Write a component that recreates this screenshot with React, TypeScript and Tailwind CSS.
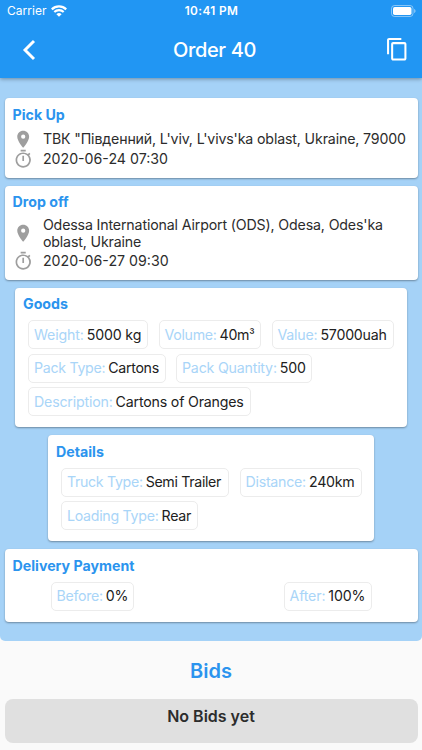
import type { ReactNode } from "react";
import { MdContentCopy, MdLocationOn, MdOutlineTimer } from "react-icons/md";

interface ChipProps {
  label: string;
  value: ReactNode;
  className: string;
  tracking?: string;
}

function Chip({
  label,
  value,
  className,
  tracking = "tracking-[-0.16px]",
}: ChipProps) {
  return (
    <div
      className={`flex h-[29px] shrink-0 items-center gap-[3px] rounded-[5px] border border-[#ececec] pl-[5px] text-[14.2px] whitespace-nowrap ${tracking} ${className}`}
    >
      <span className="text-[#a9d5f8]">{label}:</span>
      <span className="text-[#212121]">{value}</span>
    </div>
  );
}

interface CardProps {
  title: string;
  className: string;
  children: ReactNode;
}

function Card({ title, className, children }: CardProps) {
  return (
    <section
      className={`shrink-0 rounded-[4px] bg-white px-2 pt-[6.5px] shadow-[0_1px_2px_rgba(0,0,0,0.35)] ${className}`}
    >
      <h2 className="text-[14.2px] leading-[20px] font-bold text-[#2b94ee]">
        {title}
      </h2>
      {children}
    </section>
  );
}

interface StopProps {
  address: string[];
  time: string;
}

function Stop({ address, time }: StopProps) {
  return (
    <div className="mt-[4px] text-[14.2px] leading-[17.4px] whitespace-nowrap text-[#2c2c2c]">
      <div className="flex items-center">
        <MdLocationOn className="size-[20.4px] shrink-0 text-[#9e9e9e]" />
        <div className="ml-[10px] tracking-[-0.15px]">
          {address.map((line) => (
            <p key={line}>{line}</p>
          ))}
        </div>
      </div>
      <div className="flex items-center">
        <MdOutlineTimer className="size-[20.4px] shrink-0 text-[#9e9e9e]" />
        <p className="ml-[10px]">{time}</p>
      </div>
    </div>
  );
}

function StatusBar() {
  return (
    <div className="grid h-[21px] grid-cols-3 items-center pr-[6px] pl-[7px] text-[12px] leading-none">
      <div className="flex items-center gap-[4px]">
        <span className="pt-px tracking-[0.05px]">Carrier</span>
        <svg viewBox="0 0 16 12" className="h-[12px] w-[16px]" fill="none">
          <path d="M.8 4.4a10.2 10.2 0 0 1 14.4 0" stroke="white" strokeWidth="2.2" />
          <path d="M3.3 7.1a6.6 6.6 0 0 1 9.4 0" stroke="white" strokeWidth="2.1" />
          <path d="M5.4 9.2a3.7 3.7 0 0 1 5.2 0L8 11.8z" fill="white" />
        </svg>
      </div>
      <span className="pt-[2px] text-center text-[11.8px] font-semibold tracking-[0.4px]">
        10:41 PM
      </span>
      <svg viewBox="0 0 25 12" className="h-[12px] w-[25px] justify-self-end">
        <rect
          x="0.5"
          y="0.5"
          width="21.5"
          height="11"
          rx="3"
          fill="none"
          stroke="white"
          strokeOpacity="0.45"
        />
        <rect x="2" y="2" width="18.5" height="8" rx="1.7" fill="white" />
        <path d="M23.2 4v4c.8-.3 1.3-1 1.3-2s-.5-1.7-1.3-2z" fill="white" fillOpacity="0.5" />
      </svg>
    </div>
  );
}

export default function App() {
  return (
    <div className="flex h-[750px] w-[422px] flex-col overflow-hidden bg-[#fafafa] font-['Inter','Noto_Sans',sans-serif]">
      <header className="z-10 h-[78px] shrink-0 bg-[#2196f3] text-white shadow-[0_1px_4px_rgba(0,0,0,0.35)]">
        <StatusBar />
        <div className="flex h-[57px] items-center justify-between pr-[12.5px] pl-[22px]">
          <svg viewBox="0 0 14 22" className="h-[22px] w-[14px]" fill="none">
            <path d="M12 2 3 11l9 9" stroke="white" strokeWidth="2.9" />
          </svg>
          <h1 className="ml-[8px] text-[20px] font-medium tracking-[-0.35px]">
            Order 40
          </h1>
          <MdContentCopy className="size-[24.5px]" />
        </div>
      </header>

      <main className="flex h-[563px] shrink-0 flex-col items-center gap-[8px] rounded-b-[5px] bg-[#a5d2f7] pt-[20px]">
        <Card title="Pick Up" className="h-[79.5px] w-[413px]">
          <Stop
            address={[`ТВК "Південний, L'viv, L'vivs'ka oblast, Ukraine, 79000`]}
            time="2020-06-24 07:30"
          />
        </Card>
        <Card title="Drop off" className="h-[94px] w-[413px]">
          <Stop
            address={[
              "Odessa International Airport (ODS), Odesa, Odes'ka",
              "oblast, Ukraine",
            ]}
            time="2020-06-27 09:30"
          />
        </Card>
        <Card title="Goods" className="h-[139.5px] w-[392px]">
          <div className="mt-[6px] ml-[5px] flex flex-col gap-[4.5px]">
            <div className="flex gap-[10.5px]">
              <Chip label="Weight" value="5000 kg" className="w-[120px]" />
              <Chip
                label="Volume"
                value={
                  <>
                    40m<span className="align-[1px] text-[12px] leading-none">³</span>
                  </>
                }
                tracking="tracking-[-0.3px]"
                className="w-[102.5px]"
              />
              <Chip
                label="Value"
                value="57000uah"
                tracking="tracking-[-0.22px]"
                className="w-[122px]"
              />
            </div>
            <div className="flex gap-[10.5px]">
              <Chip
                label="Pack Type"
                value="Cartons"
                tracking="tracking-[-0.3px]"
                className="w-[137.5px]"
              />
              <Chip
                label="Pack Quantity"
                value="500"
                tracking="tracking-[-0.2px]"
                className="w-[136px]"
              />
            </div>
            <Chip
              label="Description"
              value="Cartons of Oranges"
              tracking="tracking-[-0.19px]"
              className="w-[223px]"
            />
          </div>
        </Card>
        <Card title="Details" className="h-[106px] w-[326px]">
          <div className="mt-[6px] ml-[5px] flex flex-col gap-[4.5px]">
            <div className="flex gap-[10.5px]">
              <Chip
                label="Truck Type"
                value="Semi Trailer"
                tracking="tracking-[-0.33px]"
                className="w-[168px]"
              />
              <Chip
                label="Distance"
                value="240km"
                tracking="tracking-[-0.25px]"
                className="w-[122px]"
              />
            </div>
            <Chip
              label="Loading Type"
              value="Rear"
              tracking="tracking-[-0.28px]"
              className="w-[137px]"
            />
          </div>
        </Card>
        <Card title="Delivery Payment" className="h-[72.5px] w-[413px]">
          <div className="mt-[6px] flex justify-between px-[38px]">
            <Chip
              label="Before"
              value="0%"
              tracking="tracking-[-0.3px]"
              className="w-[83px]"
            />
            <Chip label="After" value="100%" className="w-[88px]" />
          </div>
        </Card>
      </main>

      <h2 className="mt-[17px] text-center text-[20px] leading-[26px] font-semibold text-[#2b94ee]">
        Bids
      </h2>
      <div className="mx-[4.5px] mt-[15px] h-[43.5px] shrink-0 rounded-[8px] bg-[#e0e0e0] pt-[7px] text-center text-[16px] leading-[20px] font-semibold text-[#2c2c2c]">
        No Bids yet
      </div>
    </div>
  );
}
